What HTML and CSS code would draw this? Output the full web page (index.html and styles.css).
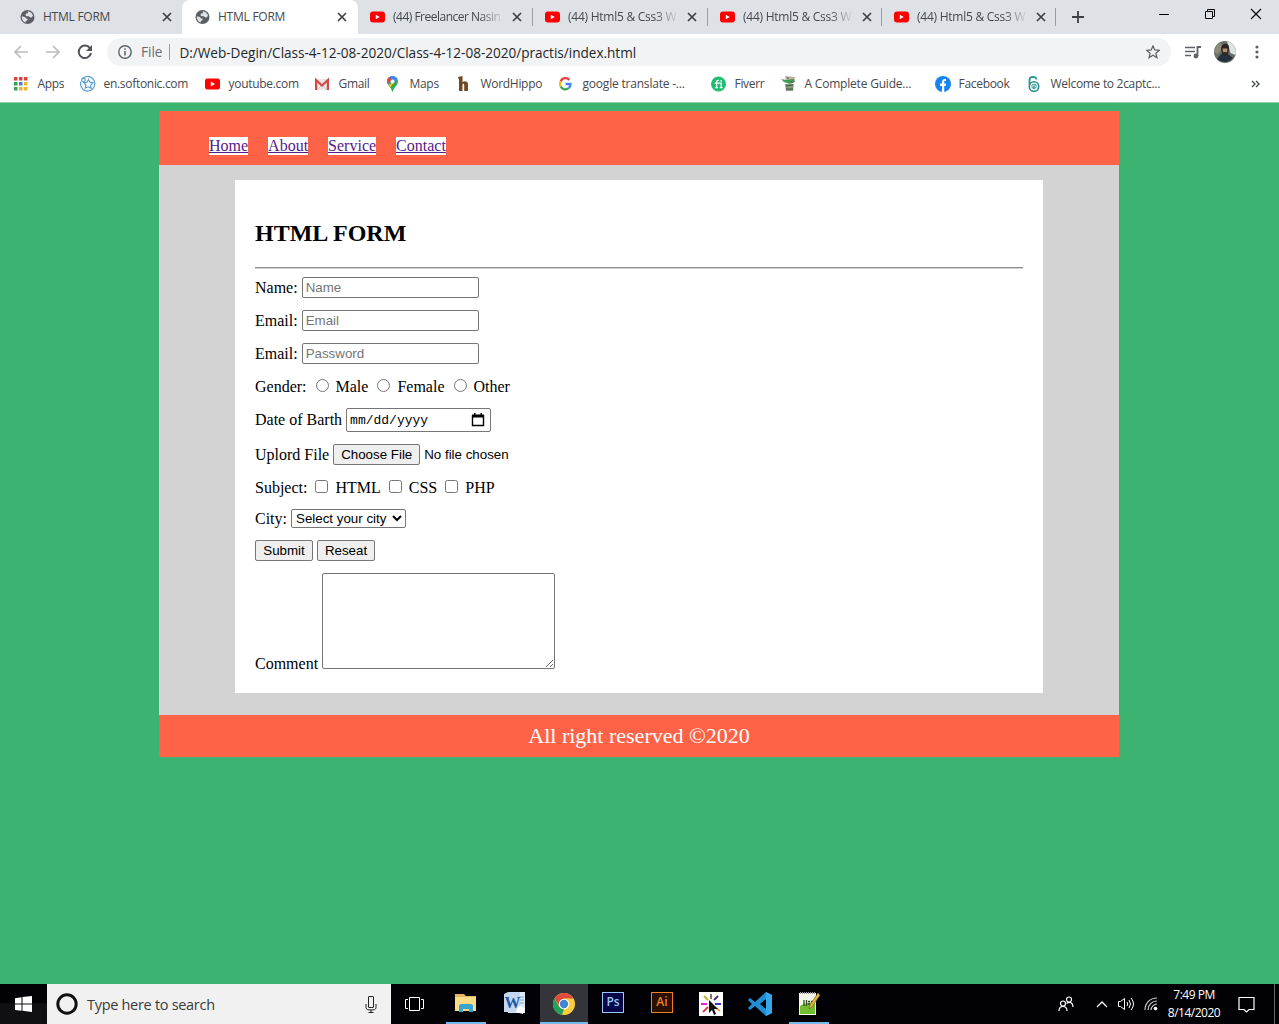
FILE: index.html
```
<!DOCTYPE html>
<html lang="en">
<head>
<meta charset="utf-8">
<title>HTML FORM</title>
<link rel="stylesheet" href="styles.css">
</head>
<body>
<svg class="defs" width="0" height="0" aria-hidden="true">
  <symbol id="x" viewBox="0 0 10 10"><path d="M1 1l8 8M9 1L1 9" stroke="#3c4043" stroke-width="1.7" fill="none"/></symbol>
  <symbol id="globe" viewBox="0 0 14 14"><circle cx="7" cy="7" r="7" fill="#5b5e63"/><path d="M1.400 6.200l3 .9 1.200 1.400 1.600.3-.3 1.400-1.500.9-.2 1.400C2.500 11.600 1 9.600 1.400 6.200zM7.200 1.300c2.500.2 4.600 1.900 5.300 4.300l-1 1.700-1.700.3-1.500-1.300-2.200-.1-1.300-1.200.9-1.400 1.800-.4z" fill="#dee1e6"/></symbol>
  <symbol id="yt" viewBox="0 0 15 11"><rect width="15" height="11" rx="3" fill="#f00"/><path d="M5.800 3.200v4.600l4-2.300z" fill="#fff"/></symbol>
</svg>
<div class="screen">
  <header class="tabs">
    <div class="tab first"><svg class="fav"><use href="#globe"/></svg><span class="tab-title">HTML FORM</span><svg class="close"><use href="#x"/></svg></div>
    <div class="tab active"><svg class="fav"><use href="#globe"/></svg><span class="tab-title">HTML FORM</span><svg class="close"><use href="#x"/></svg></div>
    <div class="tab"><svg class="fav"><use href="#yt"/></svg><span class="tab-title fade tight">(44) Freelancer Nasin</span><svg class="close"><use href="#x"/></svg></div>
    <div class="tab"><svg class="fav"><use href="#yt"/></svg><span class="tab-title fade">(44) Html5 &amp; Css3 W</span><svg class="close"><use href="#x"/></svg></div>
    <div class="tab"><svg class="fav"><use href="#yt"/></svg><span class="tab-title fade">(44) Html5 &amp; Css3 W</span><svg class="close"><use href="#x"/></svg></div>
    <div class="tab"><svg class="fav"><use href="#yt"/></svg><span class="tab-title fade">(44) Html5 &amp; Css3 W</span><svg class="close"><use href="#x"/></svg></div>
    <svg class="new-tab" width="12" height="12"><path d="M6 0v12M0 6h12" stroke="#3c4043" stroke-width="1.8"/></svg>
    <div class="window-buttons">
      <svg width="12" height="12"><path d="M1 6.500h10" stroke="#000"/></svg>
      <svg width="12" height="12"><path d="M1.500 3.500h7v7h-7zM3.500 3.500v-2h7v7h-2" fill="none" stroke="#000"/></svg>
      <svg width="12" height="12"><path d="M1 1l10 10M11 1L1 11" stroke="#000" stroke-width="1.100"/></svg>
    </div>
  </header>

  <nav class="toolbar">
    <svg width="16" height="16"><path d="M15 8H2M8 2L2 8l6 6" fill="none" stroke="#b9bbbe" stroke-width="1.700"/></svg>
    <svg width="16" height="16"><path d="M1 8h13M8 2l6 6-6 6" fill="none" stroke="#b9bbbe" stroke-width="1.700"/></svg>
    <svg width="16" height="16"><path d="M13.200 4.500A6.200 6.200 0 1 0 14 9" fill="none" stroke="#505357" stroke-width="2"/><path d="M15 1v6H9z" fill="#505357"/></svg>
    <div class="address">
      <svg width="14" height="14"><circle cx="7" cy="7" r="6.200" fill="none" stroke="#5f6368" stroke-width="1.400"/><path d="M7 6v4.500M7 3.300v1.500" stroke="#5f6368" stroke-width="1.500"/></svg>
      <span class="scheme">File</span>
      <span class="url">D:/Web-Degin/Class-4-12-08-2020/Class-4-12-08-2020/practis/index.html</span>
      <svg class="star" width="14" height="14" viewBox="0 0 14 14"><path d="M7 .9l1.800 4 4.400.5-3.300 2.900 1 4.300L7 10.300l-3.900 2.300 1-4.300L.8 5.400l4.400-.5z" fill="none" stroke="#5f6368" stroke-width="1.300"/></svg>
    </div>
    <svg width="16" height="14"><path d="M0 2.500h10M0 6.500h10M0 10.500h6" stroke="#5f6368" stroke-width="1.500"/><path d="M12.500 11V2h3.500" fill="none" stroke="#5f6368" stroke-width="1.800"/><circle cx="10.900" cy="11" r="2.400" fill="#5f6368"/></svg>
    <svg class="avatar" width="22" height="22" viewBox="0 0 22 22"><circle cx="11" cy="11" r="11" fill="#697069"/><path d="M13 .2A11 11 0 0 1 21.500 14l-5-2z" fill="#dce5e2"/><path d="M3 4l4-2 2 6-6 5-3-2z" fill="#8c8c77"/><path d="M3 18l4-5h7l5 4a11 11 0 0 1-16 1z" fill="#24313c"/><path d="M7 8c0-7 9-7 8 0l-1 5-3 2-3-2z" fill="#2c2420"/><path d="M8.500 7.500h5l-.5 4-2 2-2-2z" fill="#b58b74"/><path d="M9 11h4l-1 2.500h-2z" fill="#342923"/></svg>
    <svg class="menu" width="4" height="14"><circle cx="2" cy="2" r="1.600" fill="#5f6368"/><circle cx="2" cy="7" r="1.600" fill="#5f6368"/><circle cx="2" cy="12" r="1.600" fill="#5f6368"/></svg>
  </nav>

  <nav class="bookmarks">
    <a class="bm"><svg viewBox="0 0 16 16"><path d="M0 1h3.500v3.500H0zM5 1h3.500v3.500H5zM10 1h3.500v3.500H10z" fill="#d9433b"/><path d="M0 6h3.500v3.500H0z" fill="#34a165"/><path d="M5 6h3.500v3.500H5z" fill="#4480d8"/><path d="M10 6h3.500v3.500H10zM5 11h3.500v3.500H5zM10 11h3.500v3.500H10z" fill="#edb528"/><path d="M0 11h3.500v3.500H0z" fill="#34a165"/></svg><span>Apps</span></a>
    <a class="bm"><svg viewBox="0 0 16 16"><g fill="none" stroke="#5a9fd0" stroke-width="1.200"><path d="M2 3a7.300 7.300 0 1 1 1 10.500M1 5.500C-.5 9 2 14 6 15"/><path d="M8.500 3.500l1.300 2.700 3.200.6-2.300 2.300.3 3.200-2.800-1.500-3 1.200.7-3-2-2.400 3.100-.3z"/><circle cx="3.500" cy="4" r="1.800"/></g></svg><span>en.softonic.com</span></a>
    <a class="bm"><svg viewBox="0 0 16 16"><rect y="2.500" width="15" height="11" rx="2.500" fill="#f00"/><path d="M5.800 5.600v4.800L10 8z" fill="#fff"/></svg><span>youtube.com</span></a>
    <a class="bm"><svg viewBox="0 0 16 16"><path d="M0 3h14v11H0z" fill="#ece8e8"/><path d="M1.100 14V4L7 9.500 12.900 4v10" fill="none" stroke="#d34a43" stroke-width="2.200"/><path d="M2.500 13.500L6 10M11.500 13.500L8 10" stroke="#c9c4c4" stroke-width=".8"/></svg><span>Gmail</span></a>
    <a class="bm"><svg viewBox="0 0 16 16"><path d="M1 5.500a5.500 5.500 0 0 1 11 0c0 4-4 5-5 10H6C5.500 11 1 9.500 1 5.500z" fill="#34a853"/><path d="M1 5.500A5.500 5.500 0 0 1 8 .3L2.300 8.700A5 5 0 0 1 1 5.500z" fill="#4285f4"/><path d="M1.500 3.200A5.500 5.500 0 0 1 3 1.300l3 2.500-3.300 4z" fill="#ea4335"/><path d="M2.300 8.700L8.500 5.500l-4 5.800z" fill="#fbbc04"/><path d="M8 .3a5.500 5.500 0 0 1 3.300 2.500L8 6.500 5.500 3.300z" fill="#4285f4"/><circle cx="6.500" cy="5.500" r="2" fill="#fff"/></svg><span>Maps</span></a>
    <a class="bm"><svg viewBox="0 0 16 16"><path d="M1 1l4.500-1v6c2-1.500 5.500-1 5.500 2v7H7.200V9c0-1.600-1.700-1.600-1.700 0v6H2V2.500H1z" fill="#704925"/></svg><span>WordHippo</span></a>
    <a class="bm"><svg viewBox="0 0 16 16"><g fill="none" stroke-width="2.300"><path d="M1.700 5.500A5 5 0 0 1 10.300 4" stroke="#ea4335"/><path d="M1.700 5.500a5 5 0 0 0 0 5" stroke="#fbbc05"/><path d="M1.700 10.500a5 5 0 0 0 8 1.500" stroke="#34a853"/><path d="M6.500 8h5c0 2-.7 3.200-1.800 4" stroke="#4285f4"/></g></svg><span>google translate -...</span></a>
    <a class="bm"><svg viewBox="0 0 16 16"><circle cx="7.500" cy="8" r="7.500" fill="#1dbf73"/><path d="M3.800 7.200h6.400v4.600M5.600 12V6.200c0-1.700 1-2 2.400-1.800M4 11.700h3M8.700 11.700h3" stroke="#fff" stroke-width="1.300" fill="none"/><circle cx="10.200" cy="4.800" r=".9" fill="#fff"/></svg><span>Fiverr</span></a>
    <a class="bm"><svg viewBox="0 0 16 16"><path d="M4 0l10 1-1 5H5z" fill="#b6b49d"/><path d="M0 3l5 1 8-1 1 3-5 2-6-2z" fill="#42975a"/><path d="M4 8h9l-1 7H5z" fill="#8b997c"/><path d="M5 10l7-1M5 13h7" stroke="#315b41"/><path d="M6 2h2M10 6h2" stroke="#a53b36"/></svg><span>A Complete Guide...</span></a>
    <a class="bm"><svg viewBox="0 0 16 16"><circle cx="8" cy="8" r="8" fill="#1685f2"/><path d="M7 16v-6H5V7.500h2V6c0-2.500 1.500-3.500 4-3v2.100c-1.500-.1-1.800.2-1.800 1.200v1.200H11l-.4 2.500H9.200v6z" fill="#fff"/></svg><span>Facebook</span></a>
    <a class="bm"><svg viewBox="0 0 16 16"><g fill="none" stroke="#239190"><circle cx="7" cy="10.500" r="4.700" stroke-width="1.600"/><path d="M2.500 9V4c0-4 7-4 7-.5" stroke-width="1.700"/><circle cx="7" cy="10.300" r="2.200"/></g><path d="M7 9.500v3" stroke="#239190" stroke-width="1.400"/></svg><span>Welcome to 2captc...</span></a>
    <svg class="more" width="9" height="8"><path d="M1 1l3 3-3 3M5 1l3 3-3 3" fill="none" stroke="#4b4e52" stroke-width="1.400"/></svg>
  </nav>

  <main class="page">
    <div class="wrapper">
      <nav class="site-nav"><a href="#">Home</a><a href="#">About</a><a href="#">Service</a><a href="#">Contact</a></nav>
      <section class="content">
        <form class="form">
          <h2>HTML FORM</h2>
          <hr>
          <div class="row"><label>Name:</label><input class="text" type="text" placeholder="Name"></div>
          <div class="row"><label>Email:</label><input class="text" type="email" placeholder="Email"></div>
          <div class="row"><label>Email:</label><input class="text" type="password" placeholder="Password"></div>
          <div class="row choices"><span>Gender:</span><input type="radio" name="g"><span>Male</span><input type="radio" name="g"><span>Female</span><input type="radio" name="g"><span>Other</span></div>
          <div class="row date-row"><label>Date of Barth</label><div class="date"><span>mm/dd/yyyy</span><svg width="14" height="14"><path d="M1.500 3h11v9.500h-11z" fill="none" stroke="#000" stroke-width="1.400"/><path d="M1 1.500h12V4.500H1zM3 0h1.500v2H3zM9.500 0H11v2H9.500z"/></svg></div></div>
          <div class="row"><label>Uplord File</label><button type="button" class="choose">Choose File</button><span class="file">No file chosen</span></div>
          <div class="row choices"><span>Subject:</span><input type="checkbox"><span>HTML</span><input type="checkbox"><span>CSS</span><input type="checkbox"><span>PHP</span></div>
          <div class="row city-row"><label>City:</label><select><option>Select your city</option></select></div>
          <div class="row"><button type="button">Submit</button><button type="button">Reseat</button></div>
          <div class="row comment"><label>Comment</label><textarea></textarea></div>
        </form>
      </section>
      <footer class="site-footer">All right reserved ©2020</footer>
    </div>
  </main>

  <footer class="taskbar">
    <div class="start"><svg width="17" height="16"><path d="M0 2.200L6.500 1.200V7.500H0zM7.500 1L17 0v7.500H7.500zM0 8.500h6.500v6.300L0 13.900zM7.500 8.500H17V16l-9.500-1.200z" fill="#fff"/></svg></div>
    <div class="search">
      <svg width="22" height="22"><circle cx="11" cy="11" r="9.200" fill="none" stroke="#111" stroke-width="3"/></svg>
      <span>Type here to search</span>
      <svg width="12" height="17"><rect x="3.500" y=".5" width="5" height="11" rx=".5" fill="none" stroke="#222"/><path d="M1 8v3.500c0 2 2 2.500 5 2.500s5-.5 5-2.500V8M6 14v2.500M3.500 16.500h5" fill="none" stroke="#222"/></svg>
    </div>
    <div class="apps">
      <div class="app view"><svg width="22" height="16"><path d="M5.500 1.500h10v13h-10zM4 3.500H1.500v9H4M17 3.500h2.500v9H17" fill="none" stroke="#fff"/></svg></div>
      <div class="app open"><svg width="24" height="24"><path d="M1 2h9l2 2h10v4H1z" fill="#e2b65b"/><path d="M1 5h21v14H1z" fill="#f9dc87"/><path d="M5 20v-6c0-1 1-2 2-2h10c1 0 2 1 2 2v6h-4v-3H9v3z" fill="#37a5cf"/></svg></div>
      <div class="app"><svg width="24" height="24"><path d="M5 0h17v21H5z" fill="#dce8f6"/><path d="M1 2l4-2h12v20H1z" fill="#c3d8f0"/><path d="M17 5h4M17 8h4M17 11h4" stroke="#7ba2d2"/><text x="1.500" y="16" class="word-mark">W</text><path d="M15 14l7 2-2 6-7-2z" fill="#fff"/></svg></div>
      <div class="app open current"><svg width="24" height="24" viewBox="0 0 24 24"><circle cx="12" cy="12" r="11" fill="#ffce3d"/><path d="M2.500 6.500A11 11 0 0 1 21.500 6.500H12L8 15z" fill="#e24b3c"/><path d="M2.500 6.500L7.300 15 12 17l-2 6A11 11 0 0 1 2.500 6.500z" fill="#21a35b"/><circle cx="12" cy="12" r="5.200" fill="#fff"/><circle cx="12" cy="12" r="4.200" fill="#4285d8"/></svg></div>
      <div class="app"><span class="tile ps">Ps</span></div>
      <div class="app"><span class="tile ai">Ai</span></div>
      <div class="app"><svg width="24" height="24"><path fill="#fff" d="M0 0h24v24H0z"/><g stroke-width="2"><path d="M2 12h6" stroke="#e425cf"/><path d="M16 12h6" stroke="#4130c9"/><path d="M12 2v5" stroke="#777"/><path d="M5 4l4 4" stroke="#c8ae2c"/><path d="M19 4l-4 4" stroke="#49306d"/><path d="M4 20l5-5" stroke="#dd414c"/><path d="M17 16l4 3" stroke="#ef9b48"/></g><path d="M10 8v13l3-3 2 5 2-1-2-5h4z" fill="#111"/></svg></div>
      <div class="app"><svg width="24" height="24"><path d="M18 0l6 3v18l-6 3L7 14l-5 4-2-2 4-4-4-4 2-2 5 4zM18 7l-6 5 6 5z" fill="#208ed2"/><path d="M18 0l6 3v18l-6 3z" fill="#36a7e8"/></svg></div>
      <div class="app open"><svg width="24" height="24"><path d="M2 1h17v22H2z" fill="#f6f6eb"/><path d="M3 14q7-5 15-3v11H3z" fill="#70bd30"/><path d="M3 1h16" stroke="#999" stroke-width="2" stroke-dasharray="1 1"/><path d="M7 14V8M9.500 14V8M11 9.500h2M14 9.500h2M11 12h2" stroke="#354b29" stroke-width="1.300" fill="none"/><path d="M21 1l2 2-8 12-3 2 1-4z" fill="#e1b83e" stroke="#7a6327" stroke-width=".7"/></svg></div>
    </div>
    <div class="tray">
      <svg width="16" height="16"><g fill="none" stroke="#fff" stroke-width="1.200"><circle cx="5" cy="7.500" r="2.500"/><path d="M1 15c0-6 8-6 8 0"/><circle cx="11" cy="3.500" r="2.500"/><path d="M8.500 7.500C12 5 15 7 15 11"/></g></svg>
      <svg width="12" height="8"><path d="M1 7l5-5 5 5" fill="none" stroke="#fff" stroke-width="1.300"/></svg>
      <svg width="18" height="14"><g fill="none" stroke="#fff"><path d="M1.500 4.500h2l4-3v11l-4-3h-2z"/><path d="M10 5q1.500 2 0 4M12 3q3 4 0 8M14 1q5 6 0 12"/></g></svg>
      <svg width="14" height="14"><g fill="none" stroke="#ccc" stroke-width="1.200"><path d="M1 13C1 6 6 1 13 1M4 13c0-5 4-9 9-9M7 13c0-3 3-6 6-6"/></g><circle cx="11.500" cy="11.500" r="1.800" fill="#fff"/></svg>
      <div class="clock"><span>7:49 PM</span><span>8/14/2020</span></div>
      <svg width="17" height="17"><path d="M1 1.500h15v12h-5l-2.500 2.500L6 13.500H1z" fill="none" stroke="#fff" stroke-width="1.200"/></svg>
      <i class="peek"></i>
    </div>
  </footer>
</div>
</body>
</html>
```
FILE: styles.css
```
* { box-sizing: border-box; }
body { margin: 0; font-family: "Open Sans", "Noto Sans", sans-serif; }
svg { display: block; flex: none; }
.defs { position: absolute; }
.screen { width: 1279px; height: 1024px; display: grid; grid-template-rows: 34px 36px 33px 881px 40px; overflow: hidden; background: #fff; }

.tabs { display: grid; grid-template-columns: 182px 176px 175px 175px 174px 174px 45px 1fr; background: #dee1e6; align-items: center; }
.tab { height: 34px; display: grid; grid-template-columns: 15px 111px 10px; column-gap: 8px; align-items: center; padding-left: 12px; background: linear-gradient(#9a9ca0, #9a9ca0) no-repeat right 8px / 1px 18px; }
.tab.first { padding-left: 20px; background: #dee1e6; border-bottom-right-radius: 8px; }
.tab.active { background: #fff; border-radius: 8px 8px 0 0; padding-left: 13px; }
.fav { width: 15px; height: 14px; }
.close { width: 10px; height: 10px; }
.tab-title { font-size: 12px; line-height: 18px; letter-spacing: -0.25px; color: #45494d; white-space: nowrap; }
.fade { width: 111px; -webkit-mask-image: linear-gradient(90deg, #000 78%, transparent); mask-image: linear-gradient(90deg, #000 78%, transparent); }
.tight { letter-spacing: -0.5px; }
.new-tab { margin-left: 16px; }
.window-buttons { justify-self: end; display: flex; gap: 34px; padding: 0 17px 6px 0; }

.toolbar { display: flex; align-items: center; padding-left: 13px; gap: 16px; }
.address { width: 1064px; height: 28px; margin-left: -2px; border-radius: 14px; background: #f1f3f4; display: flex; align-items: center; padding: 0 11px; font-size: 13.6px; letter-spacing: -0.02px; white-space: nowrap; }
.scheme { color: #6a6e73; margin-left: 9px; padding-right: 7px; border-right: 1px solid #9a9da0; line-height: 16px; }
.url { color: #25282b; margin-left: 9px; }
.star { margin-left: auto; }
.address + svg { margin-left: -2px; }
.toolbar .avatar { margin-left: -3px; }
.toolbar .menu { margin-left: 3px; }

.bookmarks { display: grid; grid-template-columns: 66px 125px 110px 71px 71px 102px 152px 70px 154px 92px 224px 9px; padding: 0 0 4px 14px; align-items: center; border-bottom: 1px solid #8ecfaa; }
.bm { display: flex; align-items: center; gap: 7.5px; font-size: 12px; line-height: 18px; color: #45494d; white-space: nowrap; letter-spacing: -0.3px; }
.bm svg { width: 16px; height: 16px; }
.bm:nth-child(9), .bm:nth-child(7) { letter-spacing: -0.2px; }

.page { background: #3cb371; padding: 8px 160px 0 159px; font-family: "Liberation Serif", "Times New Roman", serif; }
.wrapper { width: 960px; }
.site-nav { height: 54px; background: tomato; display: flex; gap: 20px; padding: 26px 0 0 50px; align-items: flex-start; font-size: 16px; line-height: 18px; }
.site-nav a { background: #fff; color: #551a8b; }
.content { height: 550px; background: #d3d3d3; padding: 15px 76px 22px; }
.form { height: 513px; background: #fff; padding: 39px 20px 0; display: flex; flex-direction: column; gap: 12px; font-size: 16px; }
h2 { margin: 0 0 8px; font-size: 24px; line-height: 28px; }
hr { width: 768px; height: 2px; margin: 0 0 -4px; border: 0; border-top: 1px solid #8e8e8e; border-bottom: 1px solid #d4d4d4; flex: none; }
.row { height: 21px; display: flex; align-items: center; gap: 4px; flex: none; line-height: 20px; white-space: nowrap; }
.row input, .row button, .row select, .row textarea { font-family: "Liberation Sans", Arial, sans-serif; font-size: 13.333px; }
.row .text { width: 177px; height: 21px; margin: 0; padding: 1px 3px; border: 1px solid #767676; border-radius: 2px; }
.row.choices { height: 20px; }
.choices span { padding-top: 2px; }
.choices input { width: 13px; height: 13px; margin: 0 3px 1px 5px; flex: none; }
.choices input[type="checkbox"] { margin-left: 4px; }
.row.date-row { height: 24px; }
.date { width: 145px; height: 24px; border: 1px solid #767676; border-radius: 2px; display: flex; align-items: center; justify-content: space-between; padding: 0 5px 0 3px; font: 13px "Liberation Mono", monospace; }
.row button { height: 21px; width: 58px; padding: 0; border: 1px solid #767676; border-radius: 2px; background: #efefef; color: #000; }
.row .choose { width: 87px; }
.file { font: 13.333px "Liberation Sans", Arial, sans-serif; }
.row.city-row { height: 19px; }
select { width: 115px; height: 19px; border: 1px solid #767676; border-radius: 2px; background: #fff; color: #000; padding: 0; }
.row.comment { height: 96px; align-items: flex-end; }
.comment label { line-height: 18px; margin-bottom: -4px; }
textarea { width: 233px; height: 96px; border: 1px solid #767676; border-radius: 2px; padding: 2px; margin: 0; }
.site-footer { height: 42px; background: tomato; color: #fff; text-align: center; font-size: 22px; line-height: 41px; }

.taskbar { background: #020206; display: grid; grid-template-columns: 47px 344px 1fr 228px; color: #fff; }
.start { display: grid; place-items: center; background: linear-gradient(#020206 45%, #101012 50%); }
.search { background: #f1f1f1; color: #3b3b3b; display: flex; align-items: center; padding: 0 14px 0 9px; font-size: 14.5px; letter-spacing: -0.3px; }
.search span { margin: 0 auto 0 9px; }
.apps { display: grid; grid-template-columns: 50px repeat(8, 48px); gap: 1px; }
.apps .view { margin-left: -2px; }
.app { position: relative; display: grid; place-items: center; }
.open::after { content: ""; position: absolute; bottom: 0; left: 4px; right: 4px; height: 2px; background: #76b9ed; }
.current { background: #34353a; }
.current::after { left: 0; right: 0; }
.tile { width: 22px; height: 21px; border: 1.5px solid; font-size: 12px; font-weight: 600; line-height: 18px; text-align: center; margin-bottom: 3px; }
.ps { color: #9bc8f3; background: #05054a; }
.ai { color: #f18125; background: #2a1002; }
.word-mark { font: bold 16px "Liberation Serif", serif; fill: #1f58a8; }
.tray { display: flex; align-items: center; padding-left: 7px; }
.tray svg + svg { margin-left: 22px; }
.tray svg:nth-child(3) { margin-left: 9px; }
.tray svg:nth-child(4) { margin-left: 9px; }
.clock { width: 66px; margin-left: 3px; display: flex; flex-direction: column; text-align: center; font-size: 12px; line-height: 18px; letter-spacing: -0.5px; }
.clock + svg { margin-left: 11px; }
.peek { width: 1px; height: 40px; background: #66666a; margin-left: 19px; }
```
